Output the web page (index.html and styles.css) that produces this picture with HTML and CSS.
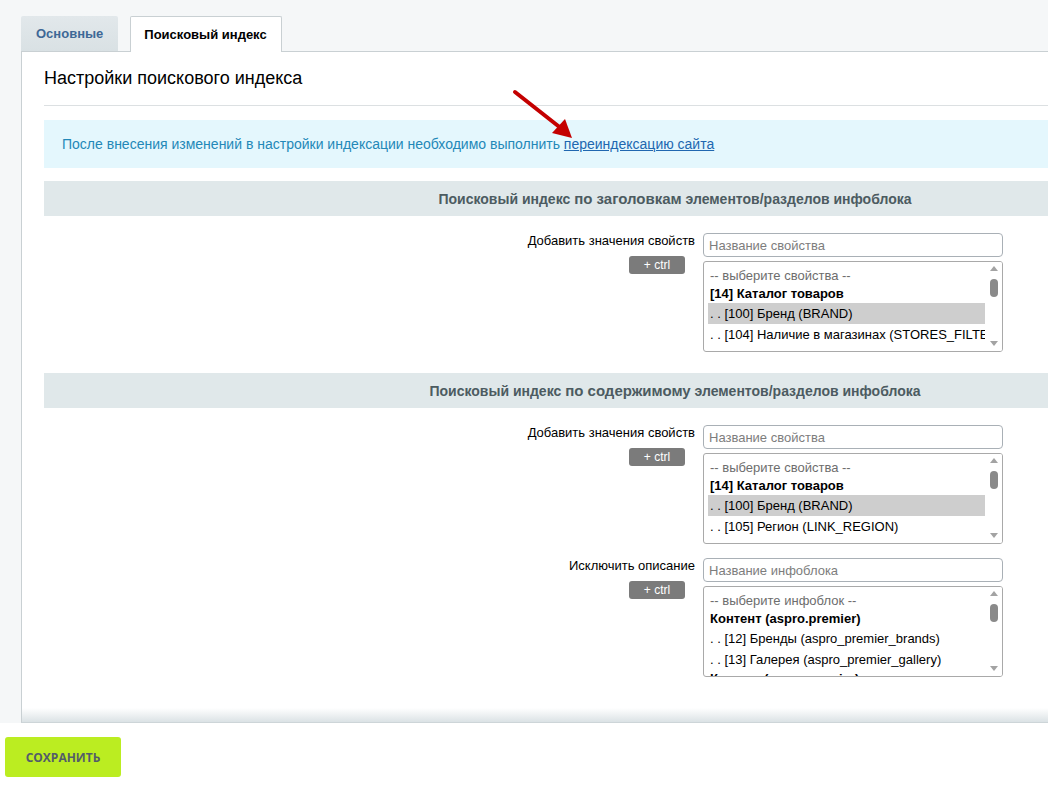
FILE: index.html
```
<!DOCTYPE html>
<html lang="ru">
<head>
    <meta charset="UTF-8">
    <meta name="viewport" content="width=device-width, initial-scale=1.0">
    <title>Поисковый индекс</title>
    <link rel="stylesheet" href="styles.css">
</head>
<body>
    <div class="tabs">
        <div class="tab">Основные</div>
        <div class="tab tab-active">Поисковый индекс</div>
    </div>

    <div class="panel">
        <h2 class="panel-title">Настройки поискового индекса</h2>

        <div class="note">
            После внесения изменений в настройки индексации необходимо выполнить <a href="#">переиндексацию сайта</a>
            <svg class="note-arrow" width="70" height="56" viewBox="0 0 70 56">
                <line x1="3" y1="3" x2="50" y2="40" stroke="#c40000" stroke-width="4" stroke-linecap="round"/>
                <polygon points="60,49 40,44 53,30" fill="#c40000"/>
            </svg>
        </div>

        <div class="form-table">
            <div class="section-head">Поисковый индекс <b>по заголовкам</b> элементов/разделов инфоблока</div>

            <div class="row">
                <div class="row-label">
                    <span>Добавить значения свойств</span>
                    <button class="ctrl-btn">+ ctrl</button>
                </div>
                <div class="row-field">
                    <input class="search-input" type="text" placeholder="Название свойства">
                    <div class="listbox">
                        <ul class="options">
                            <li class="opt-hint">-- выберите свойства --</li>
                            <li class="opt-group">[14] Каталог товаров</li>
                            <li class="opt selected">. . [100] Бренд (BRAND)</li>
                            <li class="opt">. . [104] Наличие в магазинах (STORES_FILTER)</li>
                            <li class="opt">. . [105] Регион (LINK_REGION)</li>
                        </ul>
                        <div class="scrollbar"><span class="arr-up"></span><span class="thumb"></span><span class="arr-down"></span></div>
                    </div>
                </div>
            </div>

            <div class="section-head">Поисковый индекс <b>по содержимому</b> элементов/разделов инфоблока</div>

            <div class="row row-tight">
                <div class="row-label">
                    <span>Добавить значения свойств</span>
                    <button class="ctrl-btn">+ ctrl</button>
                </div>
                <div class="row-field">
                    <input class="search-input" type="text" placeholder="Название свойства">
                    <div class="listbox">
                        <ul class="options">
                            <li class="opt-hint">-- выберите свойства --</li>
                            <li class="opt-group">[14] Каталог товаров</li>
                            <li class="opt selected">. . [100] Бренд (BRAND)</li>
                            <li class="opt">. . [105] Регион (LINK_REGION)</li>
                            <li class="opt">. . [120] Вопрос-ответ (LINK_FAQ)</li>
                        </ul>
                        <div class="scrollbar"><span class="arr-up"></span><span class="thumb"></span><span class="arr-down"></span></div>
                    </div>
                </div>
            </div>

            <div class="row row-last">
                <div class="row-label">
                    <span>Исключить описание</span>
                    <button class="ctrl-btn">+ ctrl</button>
                </div>
                <div class="row-field">
                    <input class="search-input" type="text" placeholder="Название инфоблока">
                    <div class="listbox">
                        <ul class="options">
                            <li class="opt-hint">-- выберите инфоблок --</li>
                            <li class="opt-group">Контент (aspro.premier)</li>
                            <li class="opt">. . [12] Бренды (aspro_premier_brands)</li>
                            <li class="opt">. . [13] Галерея (aspro_premier_gallery)</li>
                            <li class="opt-group">Каталог (aspro.premier)</li>
                        </ul>
                        <div class="scrollbar"><span class="arr-up"></span><span class="thumb"></span><span class="arr-down"></span></div>
                    </div>
                </div>
            </div>
        </div>
    </div>

    <div class="footer">
        <button class="save-btn">СОХРАНИТЬ</button>
    </div>
</body>
</html>
```

FILE: styles.css
```
* {
    margin: 0;
    padding: 0;
    box-sizing: border-box;
}

body {
    font-family: 'Liberation Sans', Arial, sans-serif;
    font-size: 13px;
    color: #000;
    background: #f5f7f8;
    overflow: hidden;
}

.tabs {
    display: flex;
    gap: 12px;
    padding: 16px 0 0 21px;
    height: 51px;
}

.tab {
    height: 35px;
    padding: 0 15px;
    line-height: 35px;
    font-weight: 700;
    color: #3e6896;
    background: linear-gradient(#e2e8eb, #d9e1e4);
    border-radius: 2px 2px 0 0;
}

.tab-active {
    position: relative;
    height: 36px;
    padding: 0 14px 0 13px;
    color: #000;
    background: #fff;
    border: 1px solid #c9d0d3;
    border-bottom: none;
    z-index: 1;
}

.panel {
    margin-left: 21px;
    background: #fff linear-gradient(to bottom, rgba(255, 255, 255, 0) calc(100% - 14px), #dbe2e5 100%);
    border-left: 1px solid #c9d0d3;
    border-top: 1px solid #c9d0d3;
    border-bottom: 1px solid #cdd5d8;
    padding: 16px 0 45px 22px;
    overflow: hidden;
}

.panel-title {
    font-size: 18px;
    font-weight: 400;
    line-height: 21px;
    padding-bottom: 16px;
    border-bottom: 1px solid #dce0e2;
}

.note {
    position: relative;
    margin-top: 14px;
    height: 48px;
    padding: 0 18px;
    line-height: 48px;
    font-size: 14px;
    color: #2388b8;
    background: #e4f7fd;
}

.note a {
    color: #2067b0;
    text-decoration: underline;
}

.note-arrow {
    position: absolute;
    left: 468px;
    top: -31px;
}

.form-table {
    width: 1262px;
    margin-top: 13px;
}

.section-head {
    height: 35px;
    line-height: 35px;
    text-align: center;
    font-size: 14px;
    font-weight: 700;
    color: #4c5b61;
    background: #e0e8ea;
}

.section-head b {
    font-size: 15px;
}

.row {
    display: grid;
    grid-template-columns: 659px 300px;
    padding: 17px 0 21px;
}

.row-tight {
    padding-bottom: 14px;
}

.row + .row {
    padding-top: 0;
}

.row-last {
    padding-bottom: 0;
}

.row-label {
    display: flex;
    flex-direction: column;
    align-items: flex-end;
    padding-right: 8px;
    line-height: 16px;
}

.ctrl-btn {
    margin: 7px 10px 0 0;
    width: 56px;
    height: 18px;
    border: none;
    border-radius: 3px;
    background: #7b7b7b;
    color: #fff;
    font-family: inherit;
    font-size: 12px;
}

.search-input {
    display: block;
    width: 300px;
    height: 24px;
    padding: 0 5px;
    border: 1px solid #a9b0b6;
    border-radius: 4px;
    font-family: inherit;
    font-size: 13px;
    outline: none;
}

.search-input::placeholder {
    color: #7d7d7d;
}

.listbox {
    position: relative;
    margin-top: 4px;
    height: 91px;
    border: 1px solid #a9a9a9;
    border-radius: 3px;
    overflow: hidden;
}

.options {
    list-style: none;
    padding: 5px 17px 0 4px;
}

.options li {
    padding-left: 2px;
    white-space: nowrap;
    overflow: hidden;
}

.opt-hint {
    height: 18px;
    line-height: 18px;
    color: #6d6d6d;
}

.opt-group {
    height: 18px;
    line-height: 18px;
    font-weight: 700;
}

.opt {
    height: 21px;
    line-height: 21px;
}

.opt.selected {
    background: #cecece;
}

.scrollbar {
    position: absolute;
    top: 0;
    right: 0;
    width: 16px;
    height: 100%;
    background: #fff;
}

.arr-up, .arr-down {
    position: absolute;
    left: 4px;
    width: 0;
    height: 0;
    border-left: 4px solid transparent;
    border-right: 4px solid transparent;
}

.arr-up {
    top: 4px;
    border-bottom: 5px solid #a3a3a3;
}

.arr-down {
    bottom: 5px;
    border-top: 5px solid #a3a3a3;
}

.thumb {
    position: absolute;
    top: 17px;
    left: 4px;
    width: 8px;
    height: 18px;
    border-radius: 4px;
    background: #8a8a8a;
}

.footer {
    background: #fff;
    padding: 14px 5px 8px;
    height: 70px;
}

.save-btn {
    width: 116px;
    height: 40px;
    border: none;
    border-radius: 3px;
    background: #bbed21;
    color: #535c69;
    font-family: 'Open Sans', sans-serif;
    font-size: 12px;
    font-weight: 700;
}
```
